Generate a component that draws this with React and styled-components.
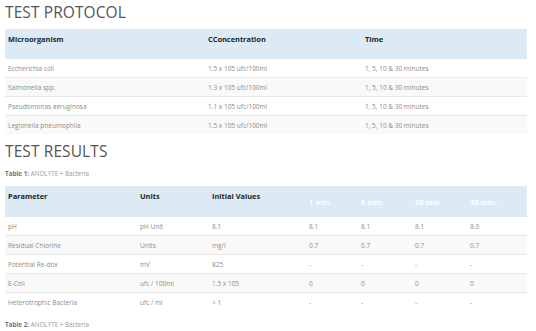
import React from 'react'
import styled, { createGlobalStyle } from 'styled-components'

const GlobalStyle = createGlobalStyle`
  body {
    margin: 0;
    background: #fff;
    font-family: 'Open Sans', 'Liberation Sans', sans-serif;
  }
`

const Page = styled.div`
  padding: 0 9px 0 5px;
`

const Heading = styled.h2`
  margin: 0;
  padding-top: ${props => props.top || 0}px;
  font-size: 15.5px;
  font-weight: 400;
  line-height: 18px;
  color: #555;
  letter-spacing: 0.1px;
`

const Caption = styled.p`
  margin: ${props => props.spacing || '0'};
  font-size: 6.3px;
  line-height: 9px;
  color: #999;
  b {
    color: #777;
    font-weight: 700;
  }
`

const Table = styled.table`
  width: 100%;
  border-collapse: collapse;
  table-layout: fixed;
  margin-top: ${props => props.top || 0}px;
`

const HeadCell = styled.th`
  background: #dbeaf5;
  text-align: left;
  font-size: 7.4px;
  font-weight: 700;
  line-height: 10px;
  color: ${props => props.light ? '#fff' : '#1e1e1e'};
  vertical-align: ${props => props.light ? 'middle' : 'top'};
  padding: ${props => props.light ? '0 3px' : `${props.pad || 5}px 3px 0`};
  height: ${props => props.h}px;
  box-sizing: border-box;
`

const Row = styled.tr`
  background: ${props => props.odd ? '#f9f9f9' : '#fff'};
  border-top: 1px solid #e8e8e8;
  &:first-child {
    border-top: none;
  }
`

const Cell = styled.td`
  font-size: 6.5px;
  line-height: 9px;
  color: #8c8c8c;
  padding: 0 3px;
  height: 18px;
  vertical-align: middle;
`

const protocol = [
  ['Eccherichia coli', '1.5 x 105 ufc/100ml', '1, 5, 10 & 30 minutes'],
  ['Salmonella spp.', '1.3 x 105 ufc/100ml', '1, 5, 10 & 30 minutes'],
  ['Pseudomonas aeruginosa', '1.1 x 105 ufc/100ml', '1, 5, 10 & 30 minutes'],
  ['Legionella pneumophila', '1.5 x 105 ufc/100ml', '1, 5, 10 & 30 minutes'],
]

const results = [
  ['pH', 'pH Unit', '8.1', '8.1', '8.1', '8.1', '8.0'],
  ['Residual Chlorine', 'Units', 'mg/l', '0.7', '0.7', '0.7', '0.7'],
  ['Potential Re-dox', 'mV', '825', '-', '-', '-', '-'],
  ['E-Coli', 'ufc / 100ml', '1.5 x 105', '0', '0', '0', '0'],
  ['Heterotrophic Bacteria', 'ufc / ml', '< 1', '-', '-', '-', '-'],
]

const resultCols = [132, 72, 97, 52, 54, 55, 60]

export default function App() {
  return (
    <Page>
      <GlobalStyle />
      <Heading top={3}>TEST PROTOCOL</Heading>

      <Table top={8}>
        <colgroup>
          <col style={{ width: 200 }} />
          <col style={{ width: 157 }} />
          <col />
        </colgroup>
        <thead>
          <tr>
            <HeadCell h={30} pad={5}>Microorganism</HeadCell>
            <HeadCell h={30} pad={5}>CConcentration</HeadCell>
            <HeadCell h={30} pad={5}>Time</HeadCell>
          </tr>
        </thead>
        <tbody>
          {protocol.map((r, i) => (
            <Row key={i} odd={i % 2 === 1}>
              {r.map((c, j) => <Cell key={j}>{c}</Cell>)}
            </Row>
          ))}
        </tbody>
      </Table>

      <Heading top={8}>TEST RESULTS</Heading>
      <Caption spacing="9px 0 0"><b>Table 1:</b> ANOLYTE + Bacteria</Caption>

      <Table top={8}>
        <colgroup>
          {resultCols.map((w, i) => <col key={i} style={{ width: w }} />)}
        </colgroup>
        <thead>
          <tr>
            <HeadCell h={31} pad={5}>Parameter</HeadCell>
            <HeadCell h={31} pad={5}>Units</HeadCell>
            <HeadCell h={31} pad={5}>Initial Values</HeadCell>
            <HeadCell h={31} light>1 min.</HeadCell>
            <HeadCell h={31} light>5 min.</HeadCell>
            <HeadCell h={31} light>10 min</HeadCell>
            <HeadCell h={31} light>30 min.</HeadCell>
          </tr>
        </thead>
        <tbody>
          {results.map((r, i) => (
            <Row key={i} odd={i % 2 === 1}>
              {r.map((c, j) => <Cell key={j}>{c}</Cell>)}
            </Row>
          ))}
        </tbody>
      </Table>

      <Caption spacing="9px 0 0"><b>Table 2:</b> ANOLYTE + Bacteria</Caption>
    </Page>
  )
}
